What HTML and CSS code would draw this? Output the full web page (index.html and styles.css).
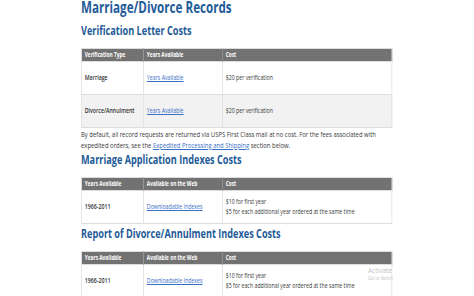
FILE: index.html
```html
<!DOCTYPE html>
<html lang="en">
<head>
<meta charset="utf-8">
<title>Marriage/Divorce Records</title>
<link rel="stylesheet" href="styles.css">
</head>
<body>
<div class="viewport">
  <div class="page">
    <h1 class="title">Marriage/Divorce Records</h1>

    <h2 class="section">Verification Letter Costs</h2>
    <table class="costs">
      <colgroup><col class="c1"><col class="c2"><col class="c3"></colgroup>
      <thead>
        <tr><th>Verification Type</th><th>Years Available</th><th>Cost</th></tr>
      </thead>
      <tbody>
        <tr><td class="strong">Marriage</td><td><a href="#">Years Available</a></td><td>$20 per verification</td></tr>
        <tr class="alt"><td class="strong">Divorce/Annulment</td><td><a href="#">Years Available</a></td><td>$20 per verification</td></tr>
      </tbody>
    </table>

    <p class="note">By default, all record requests are returned via USPS First Class mail at no cost. For the fees associated with expedited orders, see the <a href="#">Expedited Processing and Shipping</a> section below.</p>

    <h2 class="section">Marriage Application Indexes Costs</h2>
    <table class="costs">
      <colgroup><col class="c1"><col class="c2"><col class="c3"></colgroup>
      <thead>
        <tr><th>Years Available</th><th>Available on the Web</th><th>Cost</th></tr>
      </thead>
      <tbody>
        <tr><td class="strong">1966-2011</td><td><a href="#">Downloadable Indexes</a></td><td><div class="line">$10 for first year</div><div class="line">$5 for each additional year ordered at the same time</div></td></tr>
      </tbody>
    </table>

    <h2 class="section">Report of Divorce/Annulment Indexes Costs</h2>
    <table class="costs">
      <colgroup><col class="c1"><col class="c2"><col class="c3"></colgroup>
      <thead>
        <tr><th>Years Available</th><th>Available on the Web</th><th>Cost</th></tr>
      </thead>
      <tbody>
        <tr><td class="strong">1966-2011</td><td><a href="#">Downloadable Indexes</a></td><td><div class="line">$10 for first year</div><div class="line">$5 for each additional year ordered at the same time</div></td></tr>
      </tbody>
    </table>
  </div>
  <div class="watermark">
    <div class="wm-main">Activate Windows</div>
    <div class="wm-sub">Go to Settings to activate Windows.</div>
  </div>
</div>
</body>
</html>
```

FILE: styles.css
```css
html, body {
  margin: 0;
  padding: 0;
  background: #ffffff;
}

.viewport {
  position: relative;
  width: 474px;
  height: 296px;
  overflow: hidden;
}

.page {
  margin-left: 81px;
  width: 415px;
  transform: scaleX(0.75);
  transform-origin: 0 0;
  font-family: "Open Sans", "Noto Sans", sans-serif;
  color: #333333;
}

.title {
  margin: -2px 0 8px 0;
  font-size: 15.5px;
  line-height: 18px;
  font-weight: 700;
  color: #1f5b98;
}

.section {
  margin: 3px 0 10px 0;
  font-size: 12.2px;
  line-height: 14px;
  font-weight: 700;
  color: #1f5b98;
}

.note + .section {
  margin-top: 2px;
}

.costs {
  width: 100%;
  border-collapse: collapse;
  border: 1px solid #dddddd;
  table-layout: fixed;
}

.c1 { width: 20%; }
.c2 { width: 25.4%; }
.c3 { width: 54.6%; }

.costs th {
  height: 12px;
  padding: 0 4px;
  background: #727272;
  color: #ffffff;
  font-size: 6.4px;
  font-weight: 700;
  text-align: left;
  border-left: 1px solid #9a9a9a;
  line-height: 12px;
  white-space: nowrap;
}

.costs th:first-child { border-left: none; }

.costs td {
  height: 32px;
  padding: 0 4px;
  font-size: 7px;
  line-height: 10px;
  border-left: 1px solid #dddddd;
  border-top: 1px solid #dddddd;
  vertical-align: middle;
  color: #3a3a3a;
  white-space: nowrap;
}

.costs td:first-child { border-left: none; }

.costs tr.alt td { background: #f2f2f2; }

.costs td.strong {
  font-weight: 600;
  color: #333333;
}

.costs a, .note a {
  color: #3a6fc6;
  text-decoration: underline;
}

.note {
  margin: 1px 0 0 0;
  font-size: 7.9px;
  line-height: 11px;
  color: #3a3a3a;
}

.watermark {
  position: absolute;
  left: 368px;
  top: 266px;
  width: 25px;
  overflow: hidden;
  white-space: nowrap;
  font-family: "Open Sans", "Noto Sans", sans-serif;
  color: #c4c4c4;
}

.wm-main {
  font-size: 6.5px;
  line-height: 9px;
}

.wm-sub {
  font-size: 4.5px;
  line-height: 6px;
}
```
